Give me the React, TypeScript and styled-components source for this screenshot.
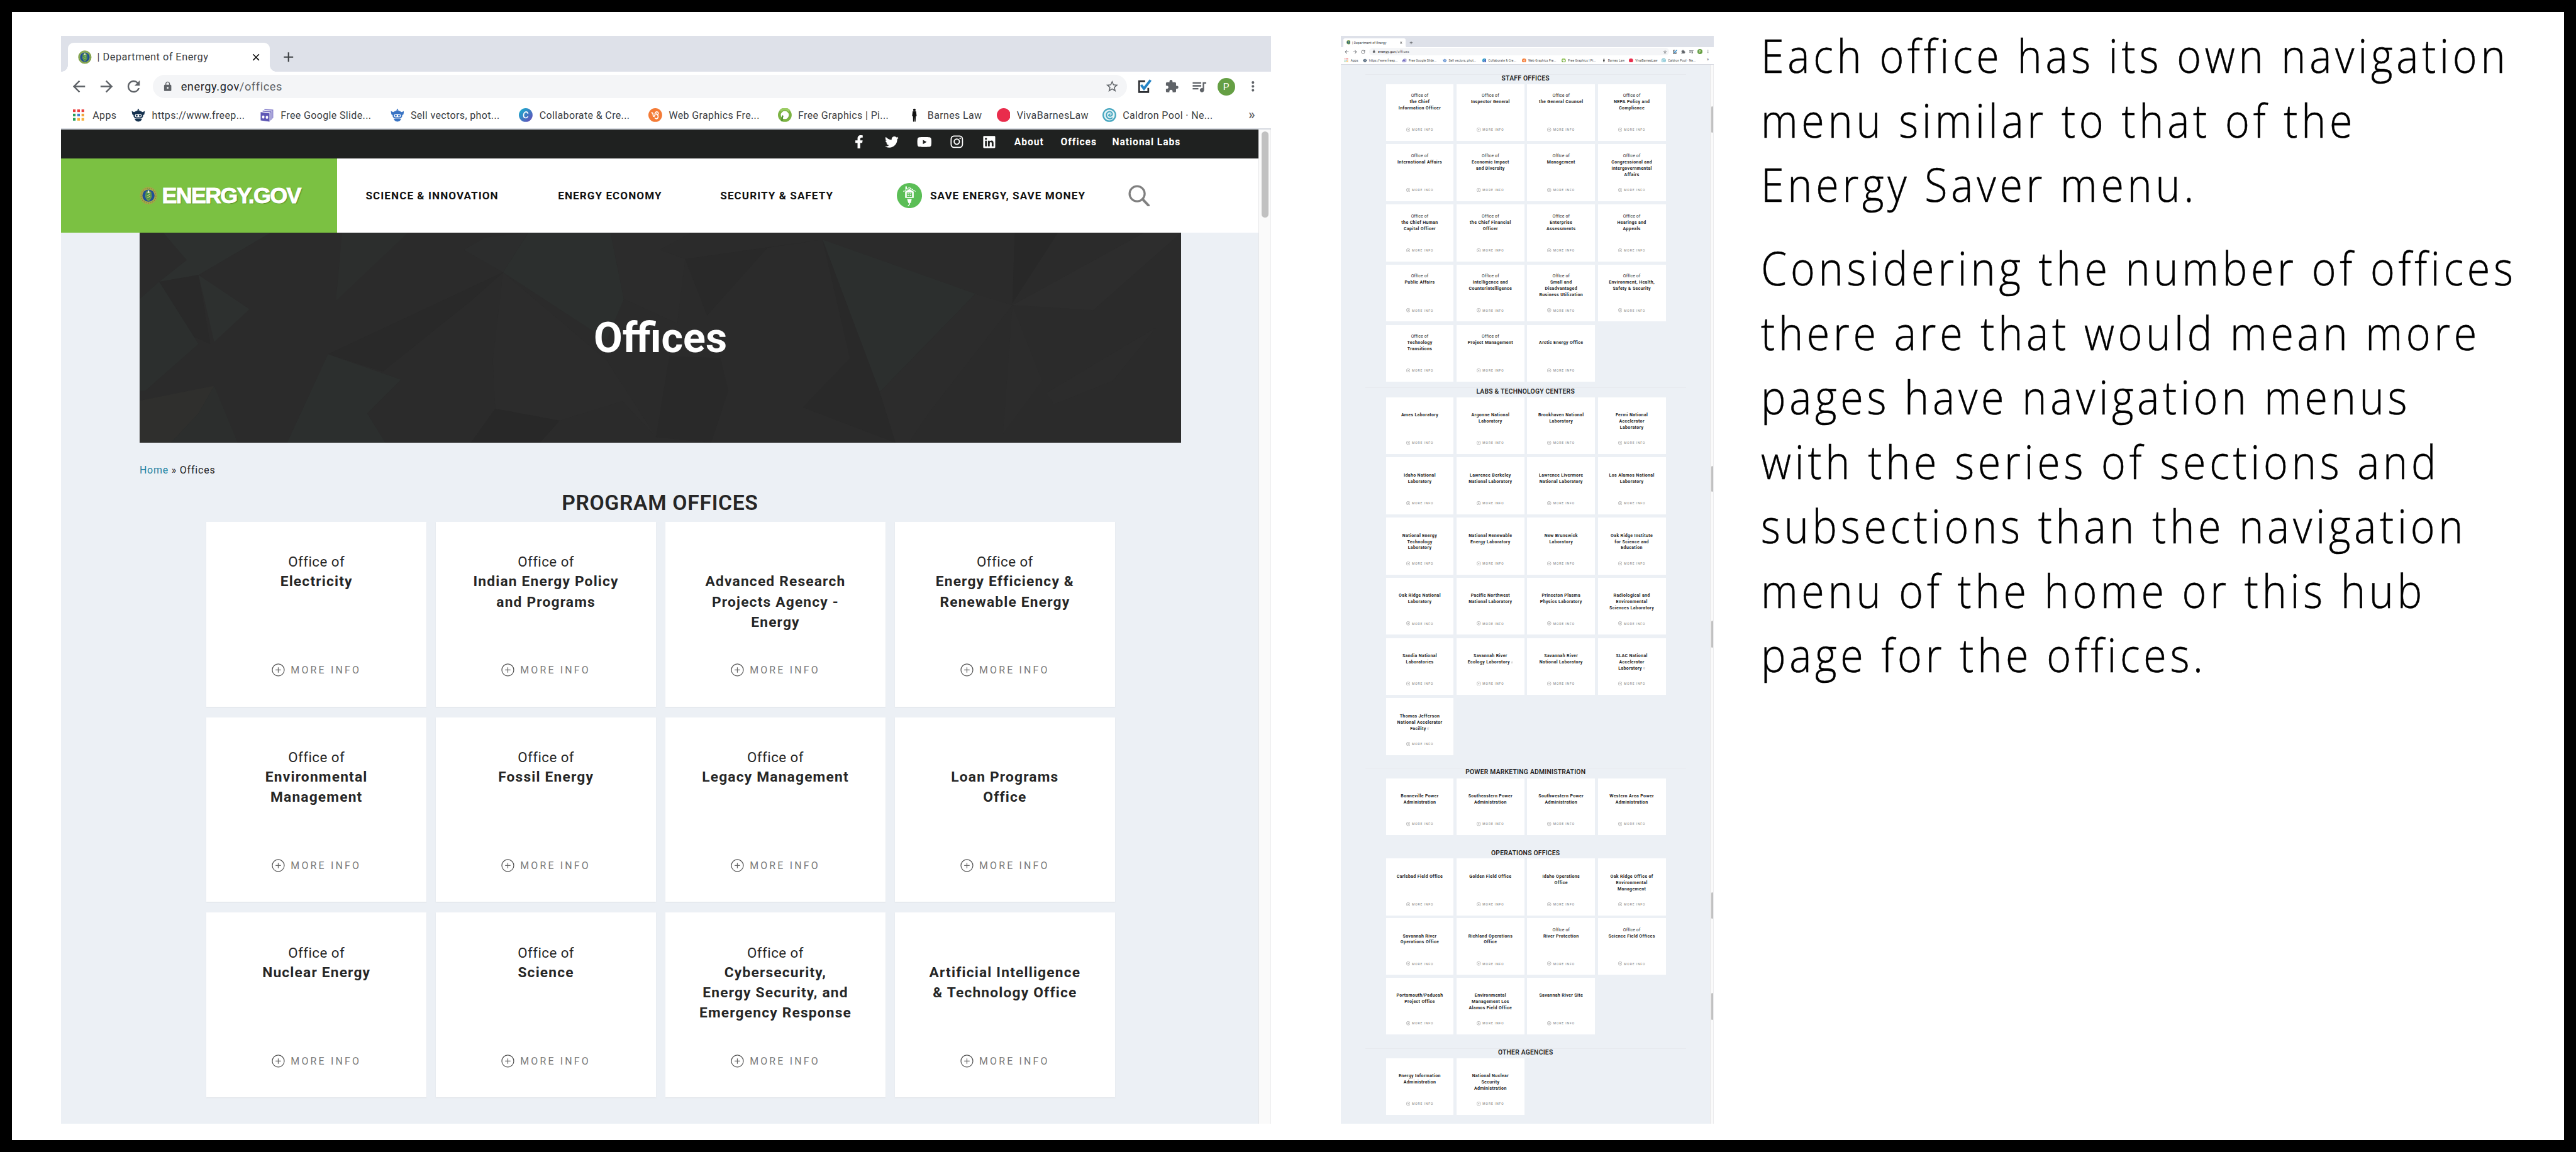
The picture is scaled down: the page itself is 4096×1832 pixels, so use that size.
import React from "react";
import styled, { createGlobalStyle } from "styled-components";
import { FaFacebookF, FaTwitter, FaYoutube, FaInstagram, FaLinkedin } from "react-icons/fa";
import {
  MdArrowBack,
  MdArrowForward,
  MdRefresh,
  MdLock,
  MdStarBorder,
  MdExtension,
  MdQueueMusic,
  MdMoreVert,
  MdClose,
  MdAdd,
} from "react-icons/md";

/* Every length is a multiple of --u, so one browser window can be drawn at any scale. */
const u = (n: number) => `calc(${n} * var(--u))`;

const Global = createGlobalStyle`
  html, body { margin: 0; padding: 0; background: #000; overflow: hidden; }
  *, *::before, *::after { box-sizing: border-box; }
  svg { display: block; flex: none; }
`;

const Slide = styled.main`
  --u: 0.91022px;
  width: 4096px;
  height: 1832px;
  display: flex;
  align-items: flex-start;
  background: #fff;
  border: ${u(21)} solid #000;
  border-bottom-width: ${u(21.6)};
  padding: ${u(42)} 0 0 ${u(86)};
  overflow: hidden;
  font-family: Roboto, "Liberation Sans", sans-serif;
`;

/* ---------- browser window ---------- */

const WindowScale = styled.div<{ $mini?: boolean }>`
  ${(p) => (p.$mini ? "--u: 0.28033px; margin-left: 111px;" : "")}
  flex: none;
`;

const Window = styled.section`
  width: ${u(2114)};
  display: flex;
  flex-direction: column;
  background: #fff;
`;

const TabStrip = styled.div`
  height: ${u(62)};
  background: #dee1e9;
  display: flex;
  align-items: flex-end;
  padding-left: ${u(12)};
`;

const Tab = styled.div`
  position: relative;
  width: ${u(352)};
  height: ${u(50)};
  background: #fff;
  border-radius: ${u(10)} ${u(10)} 0 0;
  display: flex;
  align-items: center;
  padding: 0 ${u(14)} 0 ${u(17)};
  &::before,
  &::after {
    content: "";
    position: absolute;
    bottom: 0;
    width: ${u(11)};
    height: ${u(11)};
  }
  &::before {
    right: 100%;
    background: radial-gradient(circle at 0 0, transparent ${u(10.5)}, #fff ${u(11)});
  }
  &::after {
    left: 100%;
    background: radial-gradient(circle at 100% 0, transparent ${u(10.5)}, #fff ${u(11)});
  }
`;

const TabTitle = styled.span`
  flex: 1;
  margin-left: ${u(10)};
  font-size: ${u(18)};
  letter-spacing: ${u(0.5)};
  color: #3c4043;
  white-space: pre;
`;

const NewTab = styled.div`
  height: ${u(50)};
  margin-left: ${u(19)};
  display: flex;
  align-items: center;
  color: #3c4043;
`;

const Toolbar = styled.div`
  height: ${u(54)};
  padding: ${u(6)} 0 0 ${u(15.6)};
  display: flex;
  align-items: flex-start;
  color: #5f6368;
`;

const NavButtons = styled.div`
  height: ${u(41)};
  display: flex;
  align-items: center;
  gap: ${u(15.3)};
  margin-right: ${u(18)};
`;

const Omnibox = styled.div`
  width: ${u(1702)};
  height: ${u(41)};
  border-radius: ${u(20.5)};
  background: #f4f5f7;
  display: flex;
  align-items: center;
  padding: 0 ${u(14)} 0 ${u(16)};
`;

const Url = styled.span`
  flex: 1;
  margin-left: ${u(14)};
  font-size: ${u(20)};
  letter-spacing: ${u(0.65)};
  color: #5f6368;
  white-space: pre;
  b {
    font-weight: 400;
    color: #202124;
  }
`;

const Extensions = styled.div`
  height: ${u(41)};
  margin-left: ${u(7.5)};
  display: flex;
  align-items: center;
`;

const Slot = styled.div`
  width: ${u(47.3)};
  display: flex;
  justify-content: center;
`;

const Avatar = styled.div`
  width: ${u(31)};
  height: ${u(31)};
  border-radius: 50%;
  background: #659f44;
  color: #fff;
  font-size: ${u(17)};
  display: flex;
  align-items: center;
  justify-content: center;
`;

const Bookmarks = styled.div`
  height: ${u(45)};
  padding-left: ${u(21)};
  display: flex;
  align-items: center;
`;

const Bookmark = styled.div<{ $w: number }>`
  width: ${(p) => u(p.$w)};
  flex: none;
  display: flex;
  align-items: center;
  gap: ${u(11.5)};
  font-size: ${u(17.6)};
  letter-spacing: ${u(0.4)};
  color: #3c4043;
  white-space: nowrap;
`;

const AppsLink = styled(Bookmark)`
  gap: ${u(14)};
`;

const Chevrons = styled.span`
  font-size: ${u(24)};
  line-height: ${u(20)};
  font-weight: 500;
  color: #5f6368;
`;

const ChromeEdge = styled.div`
  height: ${u(2)};
  background: #d6d9e1;
`;

const Viewport = styled.div<{ $h: number }>`
  height: ${(p) => u(p.$h)};
  display: flex;
  overflow: hidden;
`;

const Page = styled.div`
  width: ${u(2092)};
  background: #ecf0f5;
  display: flex;
  flex-direction: column;
`;

const Track = styled.div`
  width: ${u(22)};
  background: #fafafa;
  border-left: ${u(1.5)} solid #e6e6e8;
  border-right: ${u(1.5)} solid #ececee;
  padding-left: ${u(4)};
`;

const Thumb = styled.div<{ $top: number; $h: number }>`
  width: ${u(12)};
  height: ${(p) => u(p.$h)};
  margin-top: ${(p) => u(p.$top)};
  border-radius: ${u(6)};
  background: #c1c1c1;
`;

/* ---------- energy.gov page ---------- */

const UtilityBar = styled.div`
  height: ${u(51)};
  flex: none;
  background: #1f2120;
  color: #fff;
  display: flex;
  justify-content: flex-end;
  padding: ${u(8)} ${u(136)} 0 0;
`;

const Social = styled.div`
  height: ${u(28)};
  width: ${u(57)};
  display: flex;
  align-items: center;
  justify-content: center;
`;

const Spacer = styled.div<{ $w: number }>`
  width: ${(p) => u(p.$w)};
`;

const UtilityLink = styled.a<{ $w: number }>`
  width: ${(p) => u(p.$w)};
  height: ${u(28)};
  line-height: ${u(29)};
  font-size: ${u(17.2)};
  font-weight: 700;
  letter-spacing: ${u(1.05)};
  white-space: nowrap;
`;

const Header = styled.header`
  height: ${u(130)};
  flex: none;
  background: #fff;
  display: flex;
`;

const Brand = styled.div`
  width: ${u(482)};
  background: #7bc142;
  display: flex;
  align-items: center;
  padding-left: ${u(137)};
`;

const BrandName = styled.span`
  margin-left: ${u(8)};
  font-family: "Liberation Sans", Arial, sans-serif;
  font-weight: 700;
  font-size: ${u(39.5)};
  line-height: ${u(40)};
  letter-spacing: ${u(-1.9)};
  color: #fff;
  -webkit-text-stroke: ${u(1)} #fff;
  text-shadow: ${u(1.5)} ${u(1.5)} ${u(1.5)} rgba(40, 80, 10, 0.5);
`;

const Nav = styled.nav`
  display: flex;
  align-items: center;
  padding-left: ${u(50)};
`;

const NavLink = styled.a<{ $w: number }>`
  width: ${(p) => u(p.$w)};
  font-size: ${u(18.8)};
  font-weight: 700;
  letter-spacing: ${u(1.15)};
  color: #111;
  white-space: nowrap;
`;

const Saver = styled.div`
  width: ${u(58)};
`;

const Hero = styled.div`
  width: ${u(1819.5)};
  height: ${u(367)};
  flex: none;
  margin-left: ${u(137)};
  display: grid;
  background: #2b2b2b;
  & > * {
    grid-area: 1 / 1;
  }
`;

const HeroTitle = styled.h1`
  margin: 0;
  align-self: center;
  text-align: center;
  font-size: ${u(73)};
  line-height: ${u(80)};
  font-weight: 700;
  color: #fff;
`;

const Crumbs = styled.div`
  height: ${u(92)};
  padding: ${u(36)} 0 0 ${u(137)};
  font-size: ${u(17.5)};
  line-height: ${u(25)};
  letter-spacing: ${u(0.9)};
  color: #222;
  white-space: pre;
  a {
    color: #1f83a3;
  }
`;

const Group = styled.section<{ $before: number }>`
  margin-top: ${(p) => u(p.$before)};
`;

const GroupTitle = styled.h2<{ $h: number; $rule?: boolean }>`
  height: ${(p) => u(p.$h)};
  margin: 0 ${u(137)} 0;
  border-top: ${u(2)} solid ${(p) => (p.$rule ? "#e6e9ee" : "transparent")};
  text-align: center;
  font-size: ${u(37)};
  line-height: ${u(41)};
  font-weight: 600;
  letter-spacing: ${u(0.75)};
  color: #262626;
`;

const Cards = styled.div<{ $row: number; $gap: number }>`
  margin-left: ${u(253.5)};
  display: grid;
  grid-template-columns: repeat(4, ${u(385)});
  grid-auto-rows: ${(p) => u(p.$row)};
  column-gap: ${u(15.9)};
  row-gap: ${(p) => u(p.$gap)};
`;

const Card = styled.article`
  background: #fff;
  box-shadow: 0 ${u(1)} ${u(2)} rgba(0, 0, 0, 0.06);
  display: flex;
  flex-direction: column;
  align-items: center;
  justify-content: space-between;
  padding: ${u(52)} 0 ${u(51.5)};
`;

const CardText = styled.div`
  display: flex;
  flex-direction: column;
  align-items: center;
  font-size: ${u(25)};
  line-height: ${u(35.4)};
  color: #262626;
  white-space: pre;
  text-align: center;
`;

const Prefix = styled.span`
  height: ${u(35.4)};
  font-size: ${u(24.5)};
  letter-spacing: ${u(0.5)};
`;

const OfficeName = styled.strong`
  font-weight: 700;
  letter-spacing: ${u(1.3)};
`;

const External = styled.svg`
  display: inline-block;
  width: ${u(12)};
  height: ${u(12)};
  margin-left: ${u(6)};
`;

const MoreInfo = styled.div`
  height: ${u(24)};
  display: flex;
  align-items: center;
  gap: ${u(10)};
  font-size: ${u(17.5)};
  letter-spacing: ${u(3.5)};
  color: #7a7a7a;
  white-space: nowrap;
`;

/* ---------- side note ---------- */

const Note = styled.aside`
  width: ${u(1380)};
  flex: none;
  margin: ${u(-22)} 0 0 ${u(82)};
  font-family: "Open Sans", "Noto Sans", sans-serif;
  font-weight: 300;
  font-size: ${u(81)};
  line-height: ${u(112.6)};
  letter-spacing: ${u(7)};
  transform: scaleX(0.9);
  transform-origin: 0 0;
  -webkit-text-stroke: ${u(0.6)} #000;
  color: #000;
  white-space: pre;
  p {
    margin: 0 0 ${u(33.5)};
  }
`;

/* ---------- drawings ---------- */

const Sized = styled.span<{ $s: number }>`
  display: block;
  flex: none;
  width: ${(p) => u(p.$s)};
  height: ${(p) => u(p.$s)};
  svg {
    width: 100%;
    height: 100%;
  }
`;

const Seal = ({ size, ring = "#a9a54a" }: { size: number; ring?: string }) => (
  <Sized $s={size}>
    <svg viewBox="0 0 32 32">
      <circle cx="16" cy="16" r="15.5" fill={ring} />
      <circle cx="16" cy="16" r="13.5" fill="none" stroke="#6f8f3a" strokeWidth="1.2" strokeDasharray="2 2" />
      <circle cx="16" cy="16" r="11" fill="#1f4f96" />
      <path d="M11 10 Q16 3 21 10 L22 18 Q20 24 16 26 Q12 24 10 18Z" fill="#6a9a4a" />
      <path d="M12 12 H20 V18 Q18 22 16 23 Q13 21 12 18Z" fill="#3d8f55" />
      <path d="M16 5 L18 11 H14Z" fill="#e9eee6" />
      <path d="M13 17 L19 13 M14 20 L19 17" stroke="#d8cf5a" strokeWidth="1.4" />
    </svg>
  </Sized>
);

const AppsIcon = () => {
  const c = ["#ea3e3e", "#ea3e3e", "#ea3e3e", "#28a05a", "#3f7fd0", "#f0a33a", "#28a05a", "#f8b13c", "#f8b13c"];
  return (
    <Sized $s={20}>
      <svg viewBox="0 0 20 20">
        {c.map((f, i) => (
          <rect key={i} x={(i % 3) * 7.5} y={Math.floor(i / 3) * 7.5} width="4.6" height="4.6" fill={f} />
        ))}
      </svg>
    </Sized>
  );
};

const Robot = ({ color }: { color: string }) => (
  <svg viewBox="0 0 24 24">
    <path d="M12 .5 L14 4 H10Z" fill={color} />
    <path d="M4.5 7 Q12 1.5 19.500 7 L23.500 5 L22.500 11 L20.500 12 H3.500 L1.500 11 L.5 5Z" fill={color} />
    <rect x="3.500" y="8" width="17" height="10" rx="5" fill={color} />
    <path d="M5.500 18.500 H18.500 Q17 23.500 12 23.500 Q7 23.500 5.500 18.500Z" fill={color} />
    <rect x="6" y="10.500" width="12" height="5.500" rx="2.700" fill="#fff" />
    <circle cx="9.200" cy="13.200" r="1.700" fill={color} />
    <circle cx="14.800" cy="13.200" r="1.700" fill={color} />
  </svg>
);

const SlidesIcon = () => (
  <svg viewBox="0 0 24 24">
    <path d="M7 1 L22.500 2.500 V17 L20.500 19 V4.500 L7 3Z" fill="#8d87cf" />
    <path d="M4 4 L19.500 5.500 V20 L17.500 22 V7.500 L4 6Z" fill="#7a74c4" />
    <path d="M.5 7 L16 9 V23.500 L.5 21.500Z" fill="#5f58b5" />
    <rect x="3" y="13" width="4" height="5" rx="1.500" fill="#fff" />
    <rect x="9.500" y="13.500" width="4" height="5" rx="1.500" fill="#fff" />
  </svg>
);

const CanvaIcon = () => (
  <svg viewBox="0 0 24 24">
    <defs>
      <linearGradient id="canva" x1="0" y1="0" x2="1" y2="1">
        <stop offset="0" stopColor="#12b7cf" />
        <stop offset="1" stopColor="#6a45b8" />
      </linearGradient>
    </defs>
    <circle cx="12" cy="12" r="12" fill="url(#canva)" />
    <path d="M16 9.500 Q15 6.500 12.500 6.500 Q8.500 7.500 8.200 12.500 Q8.500 17 12 17 Q14.500 17 16 14.500" fill="none" stroke="#fff" strokeWidth="1.800" />
  </svg>
);

const VecteezyIcon = () => (
  <svg viewBox="0 0 24 24">
    <circle cx="12" cy="12" r="12" fill="#f47b36" />
    <path d="M5 8.500 Q7.500 7 8 10.500 Q8.300 15 10 14.500 Q12.500 12 11.500 9.500 Q13 5 16.500 7 Q18.500 10 15.500 11.500 Q13.500 11 14 9 M16 11.500 Q18.500 16 15 18.500 Q12 19 11 16.500" fill="none" stroke="#fff" strokeWidth="1.800" />
  </svg>
);

const PixIcon = () => (
  <svg viewBox="0 0 24 24">
    <circle cx="12" cy="12" r="9.500" fill="none" stroke="#7cb342" strokeWidth="5" />
    <path d="M4 5 Q12 -3 20 5" fill="none" stroke="#9ccc65" strokeWidth="4" />
    <path d="M7 23 Q7 15 9 13" stroke="#4f8f2f" strokeWidth="2.500" fill="none" />
  </svg>
);

const FigureIcon = () => (
  <svg viewBox="0 0 24 24">
    <circle cx="12" cy="3" r="2.300" fill="#111" />
    <path d="M9 5.500 H15 L16 14 L14.500 14 L14 23.500 H12.500 L12 15 L11.500 23.500 H9.800 L9.500 14 L8 14Z" fill="#111" />
  </svg>
);

const DotIcon = () => (
  <svg viewBox="0 0 24 24">
    <circle cx="12" cy="12" r="12" fill="#e92c4c" />
  </svg>
);

const CaldronIcon = () => (
  <svg viewBox="0 0 24 24">
    <circle cx="12" cy="12" r="12" fill="#46a6bf" />
    <circle cx="12" cy="12" r="9.500" fill="#e6f4f7" />
    <path d="M17.500 16.500 Q14 20 9.500 17.500 Q5.500 14 7.500 9 Q11 4.500 15.500 7 Q18.500 10 16 13 Q12.500 15 11 12.500 Q11.500 10 14 10.500" fill="none" stroke="#46a6bf" strokeWidth="2.200" />
  </svg>
);

const CheckNote = () => (
  <Sized $s={25}>
    <svg viewBox="0 0 25 25">
      <path d="M13 3.500 H2.500 V22.500 H18.500 V15" fill="none" stroke="#2c2e33" strokeWidth="3" />
      <path d="M6 10 L11 16.500 L22.500 1.500" fill="none" stroke="#2483c5" strokeWidth="4.400" />
    </svg>
  </Sized>
);

const SaverIcon = () => (
  <Sized $s={44}>
    <svg viewBox="0 0 44 44">
      <circle cx="22" cy="22" r="22" fill="#5bbe56" />
      <path d="M11.500 15 L22 8 L32.500 15" fill="none" stroke="#fff" strokeWidth="1.800" strokeDasharray="2.500 1" />
      <rect x="15" y="6" width="2.500" height="5" fill="#fff" />
      <path d="M14.500 15 L22 10.500 L29.500 15 V26 H14.500Z" fill="#fff" />
      <path d="M18 17.500 H26 V23.500 H18Z M22 17.500 V23.500 M18 20.500 H26" fill="none" stroke="#5bbe56" strokeWidth="1.300" />
      <path d="M18 28 H26 L24.500 35 H20Z" fill="#fff" />
      <path d="M22 34 Q23.500 38 19.500 39.500" fill="none" stroke="#fff" strokeWidth="1.600" />
    </svg>
  </Sized>
);

const SearchIcon = () => (
  <Sized $s={38}>
    <svg viewBox="0 0 38 38">
      <circle cx="15.500" cy="15.500" r="13.200" fill="none" stroke="#808080" strokeWidth="3.600" />
      <path d="M25 25 L35.500 36" stroke="#808080" strokeWidth="4.400" strokeLinecap="round" />
    </svg>
  </Sized>
);

const PlusCircle = () => (
  <Sized $s={23}>
    <svg viewBox="0 0 22 22">
      <circle cx="11" cy="11" r="10" fill="none" stroke="#555" strokeWidth="1.300" />
      <path d="M11 6.500 V15.500 M6.500 11 H15.500" stroke="#666" strokeWidth="1.300" />
    </svg>
  </Sized>
);

const ExternalMark = () => (
  <External viewBox="0 0 12 12">
    <path d="M6 2 H1.500 V10.500 H9.500 V6.500 M5 7 L10.500 1.500 M7.500 1 H11 V4.500" fill="none" stroke="#888" strokeWidth="1.200" />
  </External>
);

const facets: [string, string][] = [
  ["#2d302f", "135,76 272,76 180,283 130,316 165,210"],
  ["#292929", "130,316 180,283 195,620 160,560"],
  ["#2d302f", "180,283 245,450 200,610"],
  ["#2c2e2d", "363,76 447,76 355,410"],
  ["#2c2f2e", "600,76 705,76 722,400 700,600 568,270"],
  ["#2c2d2d", "518,160 545,100 600,76 568,270"],
  ["#2c2c2c", "705,76 808,76 768,160 800,205 790,520 722,400"],
  ["#292929", "800,205 975,110 905,150 828,480"],
  ["#2c2f2e", "975,110 1170,375 1048,855"],
  ["#292929", "975,110 1048,855 1068,1103 950,930 1010,690"],
  ["#2c2c2c", "1170,375 1217,430 1110,960 1085,1103 1068,1103 1048,855"],
  ["#282828", "1220,76 1275,76 1217,420"],
  ["#2d2d2d", "1217,430 1385,76 1432,76 1320,455"],
  ["#2c2c2c", "1217,430 1255,800 1205,1060"],
  ["#2c2c2c", "1400,540 1345,800 1270,915 1260,860"],
  ["#292929", "345,670 568,270 530,400 415,755"],
  ["#2c2f2e", "345,670 438,795 395,960 418,1103 293,1103"],
  ["#2c2c2c", "568,270 700,700 763,1075 720,900 640,995 558,937 555,700"],
  ["#282828", "558,937 640,995 615,1103 527,1103"],
  ["#292929", "780,680 845,690 855,850 833,1103 763,1075"],
  ["#2c2f2e", "105,400 130,316 180,620 112,850 105,850"],
  ["#2f2f2d", "108,895 200,825 180,960 145,1103 105,1103 105,895"],
  ["#2c2e2d", "200,825 230,1103 145,1103 180,960"],
];

const HeroArt = styled.svg`
  width: 100%;
  height: 100%;
`;

/* ---------- data ---------- */

const bookmarks: [string, number, React.ReactNode | null][] = [
  ["https://www.freep...", 225, <Robot color="#16324f" />],
  ["Free Google Slide...", 227, <SlidesIcon />],
  ["Sell vectors, phot...", 225, <Robot color="#3a74c4" />],
  ["Collaborate & Cre...", 226, <CanvaIcon />],
  ["Web Graphics Fre...", 226, <VecteezyIcon />],
  ["Free Graphics | Pi...", 226, <PixIcon />],
  ["Barnes Law", 156, <FigureIcon />],
  ["VivaBarnesLaw", 185, <DotIcon />],
  ["Caldron Pool · Ne...", 255, <CaldronIcon />],
];

/* A leading "~" marks a name without the "Office of" line; a trailing "^" an external link. */
const programOffices = [
  "Electricity",
  "Indian Energy Policy\nand Programs",
  "~Advanced Research\nProjects Agency -\nEnergy",
  "Energy Efficiency &\nRenewable Energy",
  "Environmental\nManagement",
  "Fossil Energy",
  "Legacy Management",
  "~Loan Programs\nOffice",
  "Nuclear Energy",
  "Science",
  "Cybersecurity,\nEnergy Security, and\nEmergency Response",
  "~Artificial Intelligence\n& Technology Office",
];

interface GroupData {
  title: string;
  before: number;
  titleHeight: number;
  row: number;
  gap: number;
  rule?: boolean;
  offices: string[];
}

const moreGroups: GroupData[] = [
  {
    title: "STAFF OFFICES",
    before: 54,
    titleHeight: 56,
    row: 323,
    gap: 18.5,
    rule: true,
    offices: [
      "the Chief\nInformation Officer",
      "Inspector General",
      "the General Counsel",
      "NEPA Policy and\nCompliance",
      "International Affairs",
      "Economic Impact\nand Diversity",
      "Management",
      "Congressional and\nIntergovernmental\nAffairs",
      "the Chief Human\nCapital Officer",
      "the Chief Financial\nOfficer",
      "Enterprise\nAssessments",
      "Hearings and\nAppeals",
      "Public Affairs",
      "Intelligence and\nCounterintelligence",
      "Small and\nDisadvantaged\nBusiness Utilization",
      "Environment, Health,\nSafety & Security",
      "Technology\nTransitions",
      "Project Management",
      "~Arctic Energy Office",
    ],
  },
  {
    title: "LABS & TECHNOLOGY CENTERS",
    before: 33,
    titleHeight: 55,
    row: 323,
    gap: 18.5,
    rule: true,
    offices: [
      "~Ames Laboratory",
      "~Argonne National\nLaboratory",
      "~Brookhaven National\nLaboratory",
      "~Fermi National\nAccelerator\nLaboratory",
      "~Idaho National\nLaboratory",
      "~Lawrence Berkeley\nNational Laboratory",
      "~Lawrence Livermore\nNational Laboratory",
      "~Los Alamos National\nLaboratory",
      "~National Energy\nTechnology\nLaboratory",
      "~National Renewable\nEnergy Laboratory",
      "~New Brunswick\nLaboratory",
      "~Oak Ridge Institute\nfor Science and\nEducation",
      "~Oak Ridge National\nLaboratory",
      "~Pacific Northwest\nNational Laboratory",
      "~Princeton Plasma\nPhysics Laboratory",
      "~Radiological and\nEnvironmental\nSciences Laboratory",
      "~Sandia National\nLaboratories",
      "~Savannah River\nEcology Laboratory^",
      "~Savannah River\nNational Laboratory",
      "~SLAC National\nAccelerator\nLaboratory^",
      "~Thomas Jefferson\nNational Accelerator\nFacility^",
    ],
  },
  {
    title: "POWER MARKETING ADMINISTRATION",
    before: 74,
    titleHeight: 58,
    row: 323,
    gap: 18.5,
    rule: true,
    offices: [
      "~Bonneville Power\nAdministration",
      "~Southeastern Power\nAdministration",
      "~Southwestern Power\nAdministration",
      "~Western Area Power\nAdministration",
    ],
  },
  {
    title: "OPERATIONS OFFICES",
    before: 77,
    titleHeight: 55,
    row: 322,
    gap: 16.2,
    offices: [
      "~Carlsbad Field Office",
      "~Golden Field Office",
      "~Idaho Operations\nOffice",
      "~Oak Ridge Office of\nEnvironmental\nManagement",
      "~Savannah River\nOperations Office",
      "~Richland Operations\nOffice",
      "River Protection",
      "Science Field Offices",
      "~Portsmouth/Paducah\nProject Office",
      "~Environmental\nManagement Los\nAlamos Field Office",
      "~Savannah River Site",
    ],
  },
  {
    title: "OTHER AGENCIES",
    before: 79,
    titleHeight: 55,
    row: 323,
    gap: 18.5,
    rule: true,
    offices: ["~Energy Information\nAdministration", "~National Nuclear\nSecurity\nAdministration"],
  },
];

/* ---------- components ---------- */

const Icon = ({ s, children }: { s: number; children: React.ReactNode }) => <Sized $s={s}>{children}</Sized>;

const OfficeCard = ({ label }: { label: string }) => {
  const plain = label.startsWith("~");
  const external = label.endsWith("^");
  return (
    <Card>
      <CardText>
        <Prefix>{plain ? "" : "Office of"}</Prefix>
        <OfficeName>
          {label.replace(/[~^]/g, "")}
          {external && <ExternalMark />}
        </OfficeName>
      </CardText>
      <MoreInfo>
        <PlusCircle />
        MORE INFO
      </MoreInfo>
    </Card>
  );
};

const OfficeGroup = ({ title, before, titleHeight, row, gap, rule, offices }: GroupData) => (
  <Group $before={before}>
    <GroupTitle $h={titleHeight} $rule={rule}>
      {title}
    </GroupTitle>
    <Cards $row={row} $gap={gap}>
      {offices.map((o) => (
        <OfficeCard key={o} label={o} />
      ))}
    </Cards>
  </Group>
);

const BrowserWindow = ({
  height,
  thumbs,
  children,
}: {
  height: number;
  thumbs: [number, number][];
  children: React.ReactNode;
}) => (
  <Window>
    <TabStrip>
      <Tab>
        <Seal size={24} ring="#8cab58" />
        <TabTitle>| Department of Energy</TabTitle>
        <Icon s={20}>
          <MdClose />
        </Icon>
      </Tab>
      <NewTab>
        <Icon s={28}>
          <MdAdd />
        </Icon>
      </NewTab>
    </TabStrip>
    <Toolbar>
      <NavButtons>
        <Icon s={32}>
          <MdArrowBack />
        </Icon>
        <Icon s={32}>
          <MdArrowForward />
        </Icon>
        <Icon s={32}>
          <MdRefresh />
        </Icon>
      </NavButtons>
      <Omnibox>
        <Icon s={19}>
          <MdLock />
        </Icon>
        <Url>
          <b>energy.gov</b>/offices
        </Url>
        <Icon s={25}>
          <MdStarBorder />
        </Icon>
      </Omnibox>
      <Extensions>
        <Slot>
          <CheckNote />
        </Slot>
        <Slot>
          <Icon s={25}>
            <MdExtension />
          </Icon>
        </Slot>
        <Slot>
          <Icon s={30}>
            <MdQueueMusic />
          </Icon>
        </Slot>
        <Slot>
          <Avatar>P</Avatar>
        </Slot>
        <Slot>
          <Icon s={27}>
            <MdMoreVert />
          </Icon>
        </Slot>
      </Extensions>
    </Toolbar>
    <Bookmarks>
      <AppsLink $w={102}>
        <AppsIcon />
        <span>Apps</span>
      </AppsLink>
      {bookmarks.map(([label, w, icon]) => (
        <Bookmark key={label} $w={w}>
          <Icon s={24}>{icon}</Icon>
          <span>{label}</span>
        </Bookmark>
      ))}
      <Chevrons>»</Chevrons>
    </Bookmarks>
    <ChromeEdge />
    <Viewport $h={height}>
      <Page>{children}</Page>
      <Track>
        {thumbs.map(([top, h]) => (
          <Thumb key={top} $top={top} $h={h} />
        ))}
      </Track>
    </Viewport>
  </Window>
);

export default function App() {
  return (
    <Slide>
      <Global />
      <WindowScale>
        <BrowserWindow height={1737} thumbs={[[4, 150]]}>
          <UtilityBar>
            <Social>
              <Icon s={24}>
                <FaFacebookF />
              </Icon>
            </Social>
            <Social>
              <Icon s={24}>
                <FaTwitter />
              </Icon>
            </Social>
            <Social>
              <Icon s={26}>
                <FaYoutube />
              </Icon>
            </Social>
            <Social>
              <Icon s={25}>
                <FaInstagram />
              </Icon>
            </Social>
            <Social>
              <Icon s={24}>
                <FaLinkedin />
              </Icon>
            </Social>
            <Spacer $w={15} />
            <UtilityLink $w={81}>About</UtilityLink>
            <UtilityLink $w={90}>Offices</UtilityLink>
            <UtilityLink $w={120}>National Labs</UtilityLink>
          </UtilityBar>
          <Header>
            <Brand>
              <Seal size={31} />
              <BrandName>ENERGY.GOV</BrandName>
            </Brand>
            <Nav>
              <NavLink $w={336}>SCIENCE &amp; INNOVATION</NavLink>
              <NavLink $w={283.5}>ENERGY ECONOMY</NavLink>
              <NavLink $w={308.5}>SECURITY &amp; SAFETY</NavLink>
              <Saver>
                <SaverIcon />
              </Saver>
              <NavLink $w={346}>SAVE ENERGY, SAVE MONEY</NavLink>
              <SearchIcon />
            </Nav>
          </Header>
          <Hero>
            <HeroArt viewBox="105 76 1327 1027" preserveAspectRatio="none">
              {facets.map(([fill, points]) => (
                <polygon key={points} fill={fill} points={points} />
              ))}
            </HeroArt>
            <HeroTitle>Offices</HeroTitle>
          </Hero>
          <Crumbs>
            <a>Home</a> » Offices
          </Crumbs>
          <OfficeGroup title="PROGRAM OFFICES" before={-9} titleHeight={55} row={322.8} gap={18.5} offices={programOffices} />
        </BrowserWindow>
      </WindowScale>
      <WindowScale $mini>
        <BrowserWindow
          height={6006}
          thumbs={[
            [236, 149],
            [1893, 144],
            [733, 153],
            [1386, 151],
            [422, 151],
          ]}
        >
          {moreGroups.map((g) => (
            <OfficeGroup key={g.title} {...g} />
          ))}
        </BrowserWindow>
      </WindowScale>
      <Note>
        <p>{"Each office has its own navigation\nmenu similar to that of the\nEnergy Saver menu."}</p>
        <p>
          {
            "Considering the number of offices\nthere are that would mean more\npages have navigation menus\nwith the series of sections and\nsubsections than the navigation\nmenu of the home or this hub\npage for the offices."
          }
        </p>
      </Note>
    </Slide>
  );
}
